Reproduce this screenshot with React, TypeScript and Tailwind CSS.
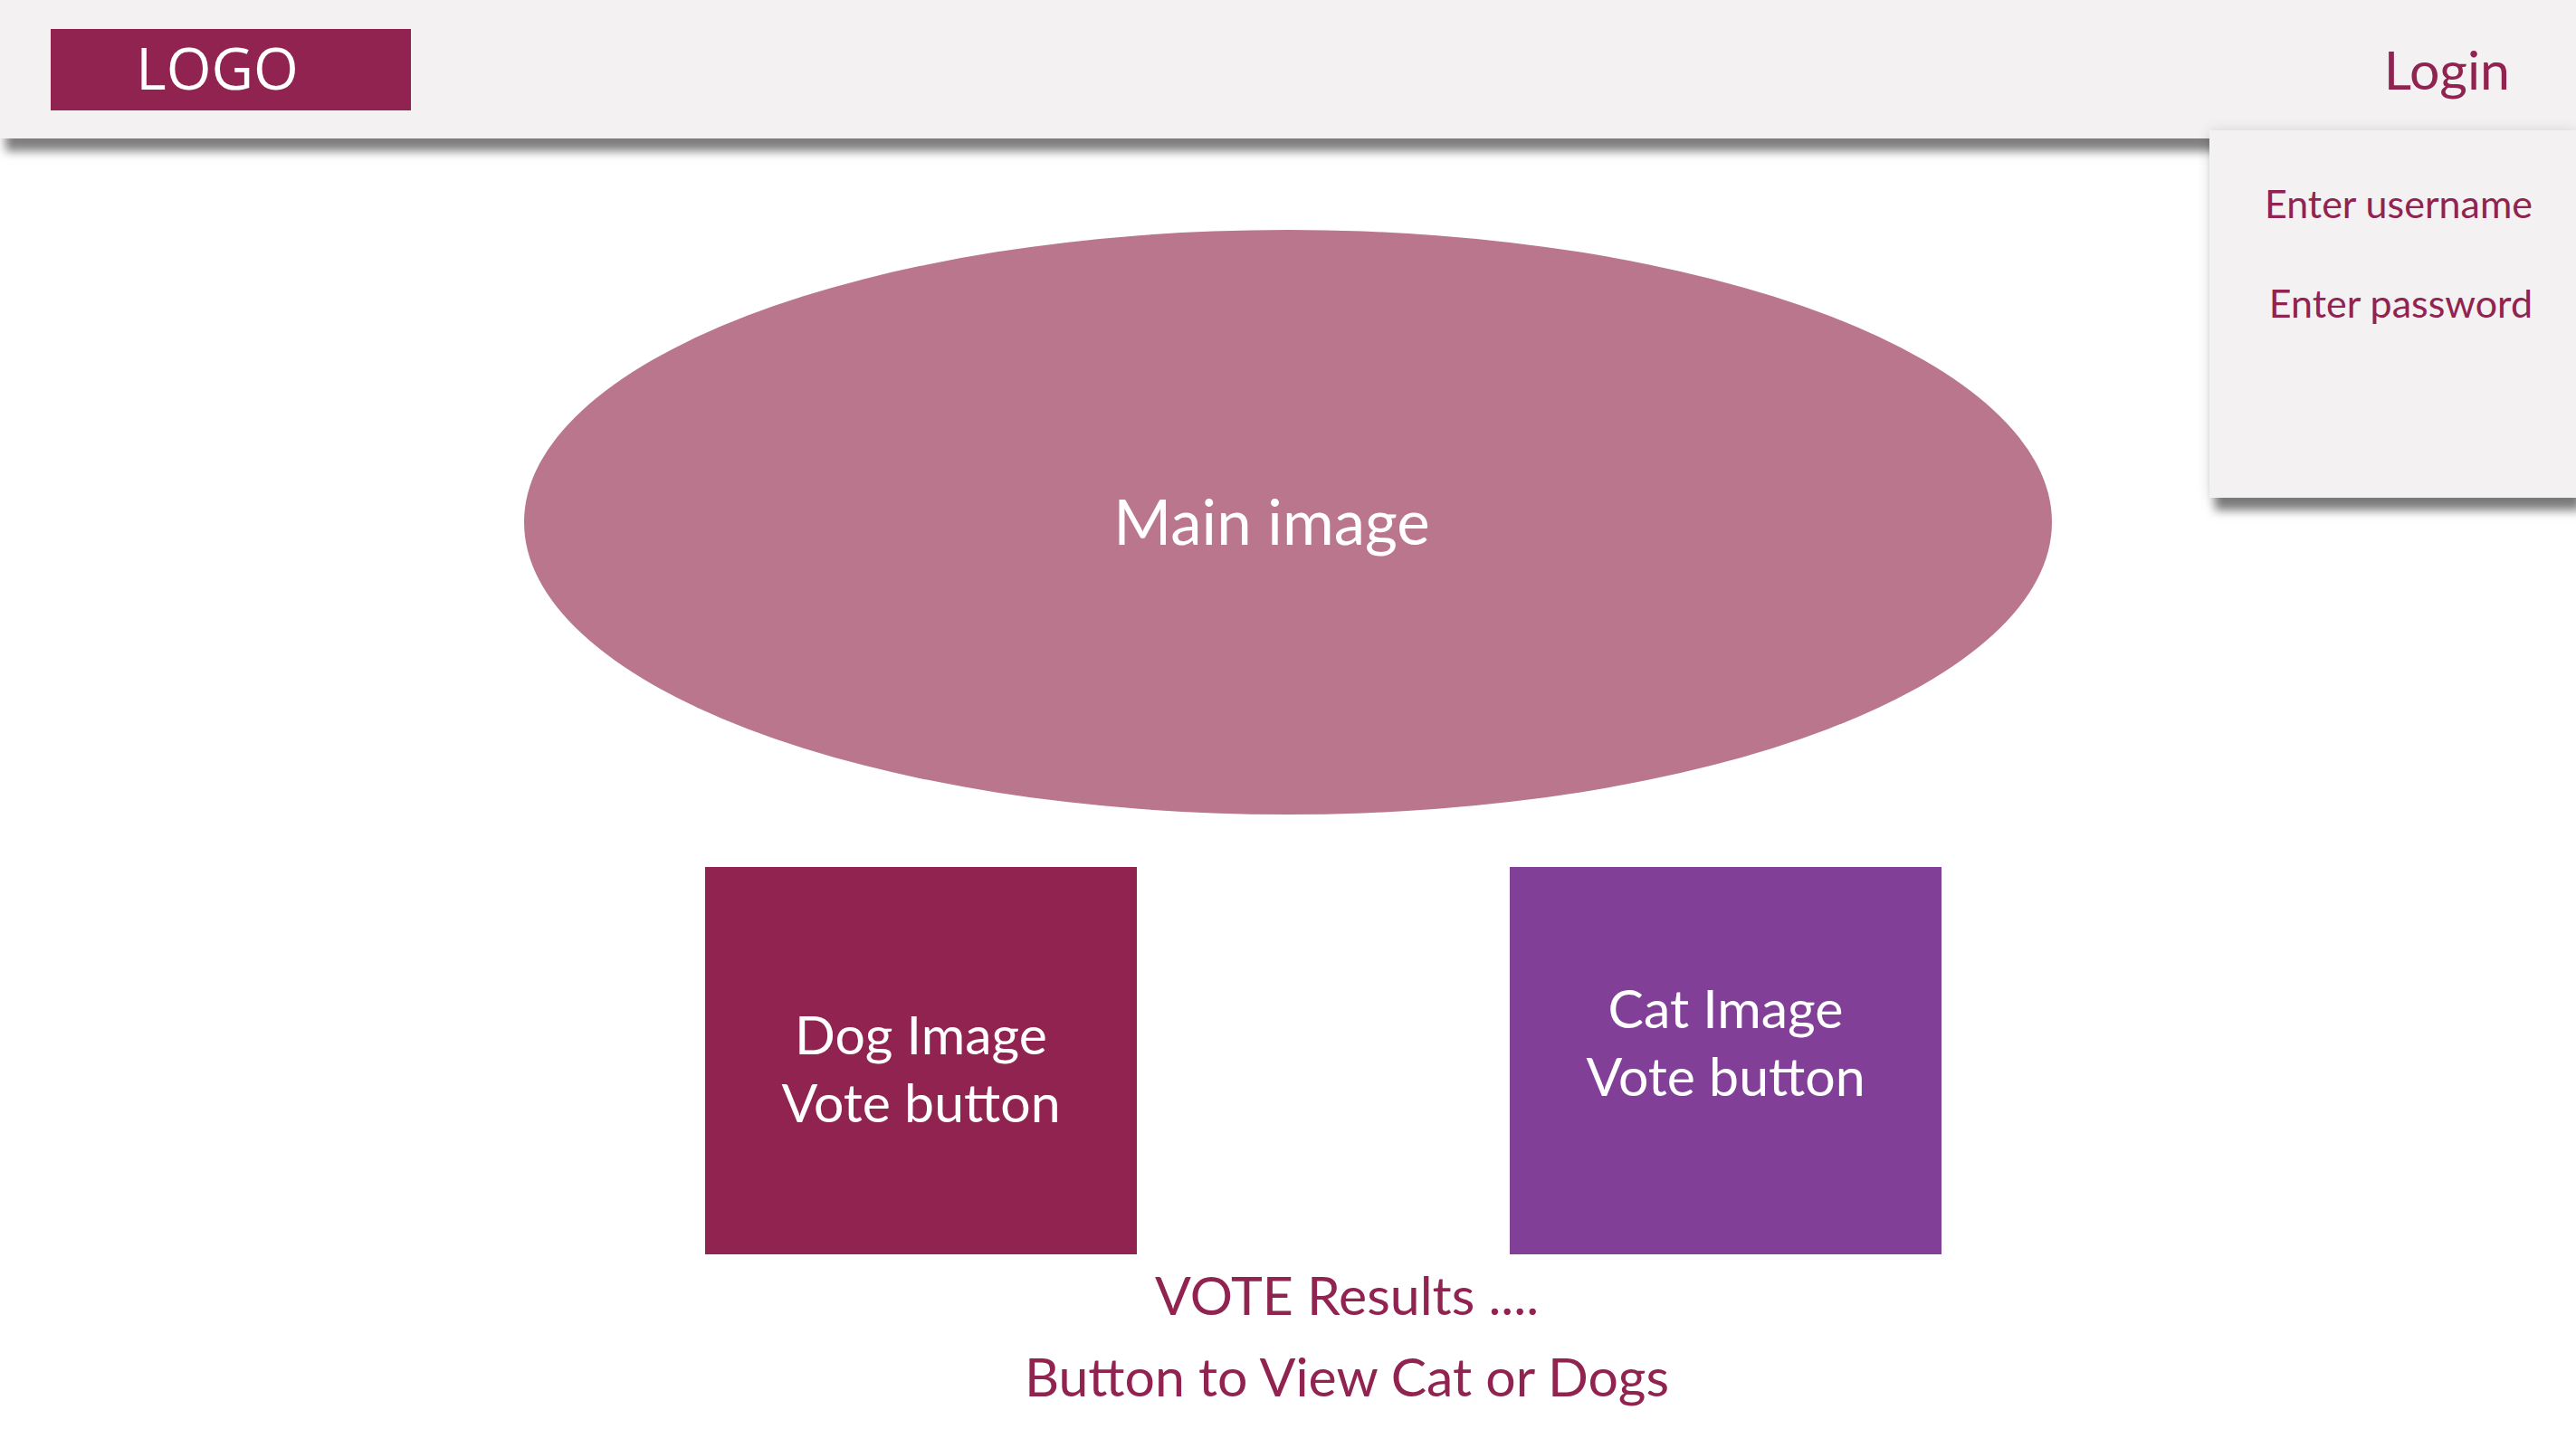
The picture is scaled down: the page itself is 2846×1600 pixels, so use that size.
export default function App() {
  return (
    <div className="relative w-[2846px] h-[1600px] overflow-hidden bg-white font-['Lato','Liberation_Sans',sans-serif]">
      {/* top bar */}
      <header className="relative z-10 flex h-[153px] items-center justify-between bg-[#f3f1f2] pl-[56px] pr-[73px] shadow-[6px_14px_10px_rgba(0,0,0,0.5)]">
        <div className="flex h-[90px] w-[398px] items-center justify-center bg-[#912350]">
          <span className="font-['Open_Sans',sans-serif] text-[64px] leading-none text-white mt-[-4px] pr-[30px]">LOGO</span>
        </div>
        <button type="button" className="text-[59px] leading-none text-[#912350]">
          Login
        </button>
      </header>

      {/* login dropdown */}
      <div className="absolute right-0 top-[144px] z-20 h-[406px] w-[405px] bg-[#f3f1f2] pr-[48px] pt-[26px] text-right shadow-[6px_14px_10px_rgba(0,0,0,0.5),0_0_14px_rgba(0,0,0,0.12)]">
        <div className="text-[43px] leading-[110px] text-[#912350]">Enter username</div>
        <div className="text-[43px] leading-[110px] text-[#912350]">Enter password</div>
      </div>

      <main className="flex flex-col items-center">
        <div className="mt-[101px] flex h-[646px] w-[1688px] items-center justify-center rounded-[50%] bg-[#ba768c]">
          <span className="mr-[36px] mb-[4px] text-[69px] leading-none text-white">Main image</span>
        </div>

        <div className="mt-[58px] flex gap-[412px] pl-[78px]">
          <button type="button" className="flex h-[428px] w-[477px] flex-col items-center justify-start bg-[#912350] pt-[147px] text-[59px] leading-[75px] text-white">
            <span>Dog Image</span>
            <span>Vote button</span>
          </button>
          <button type="button" className="flex h-[428px] w-[477px] flex-col items-center justify-start bg-[#823f98] pt-[118px] text-[59px] leading-[75px] text-white">
            <span>Cat Image</span>
            <span>Vote button</span>
          </button>
        </div>

        <div className="flex flex-col items-center pl-[130px] text-[59px] leading-[90px] text-[#912350]">
          <span>VOTE Results ....</span>
          <span>Button to View Cat or Dogs</span>
        </div>
      </main>
    </div>
  );
}
